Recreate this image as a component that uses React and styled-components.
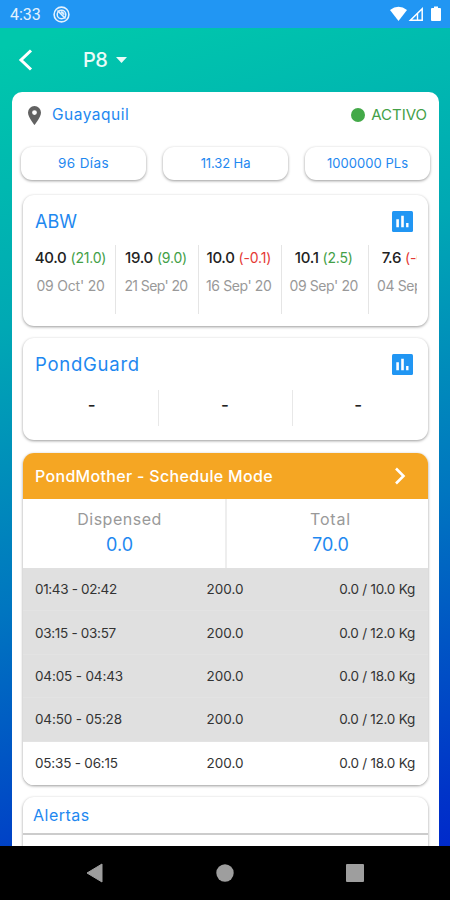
import React from 'react';
import styled, { createGlobalStyle } from 'styled-components';

const GlobalStyle = createGlobalStyle`
  * {
    box-sizing: border-box;
  }

  body {
    margin: 0;
    font-family: Inter, 'Liberation Sans', sans-serif;
  }
`;

const Screen = styled.div`
  width: 450px;
  height: 900px;
  overflow: hidden;
  display: flex;
  flex-direction: column;
`;

const StatusBar = styled.div`
  height: 28px;
  flex: none;
  display: flex;
  align-items: center;
  padding: 0 8px 0 10px;
  background: #2196f3;
`;

const Time = styled.span`
  width: 43px;
  font: 400 16px Roboto, sans-serif;
  color: #e4f2fe;
  padding-top: 1px;
`;

const StatusIcons = styled.div`
  margin-left: auto;
  display: flex;
`;

const Body = styled.div`
  height: 818px;
  flex: none;
  overflow: hidden;
  padding: 0 11px 0 12px;
  background: linear-gradient(165deg, #00c8ac 2%, #00a8b4 32%, #0076c0 62%, #0034c8 94%, #002acb 100%);
`;

const AppBar = styled.div`
  height: 64px;
  display: flex;
  align-items: center;
  padding-left: 5px;
`;

const PondName = styled.span`
  margin: 0 9px 0 48px;
  font-size: 20px;
  font-weight: 500;
  letter-spacing: -0.5px;
  color: #e9fbf8;
`;

const Panel = styled.main`
  height: 780px;
  padding: 0 11px;
  border-radius: 10px 10px 0 0;
  background: #fff;
`;

const Location = styled.div`
  height: 46px;
  display: flex;
  align-items: center;
  padding: 0 1px 0 5px;
`;

const Label = styled.span`
  font-size: ${({ $size }) => $size || 14}px;
  font-weight: ${({ $weight }) => $weight || 400};
  letter-spacing: ${({ $spacing }) => $spacing || 0}px;
  color: ${({ $color }) => $color || '#1e88f0'};
  white-space: nowrap;
`;

const Place = styled(Label)`
  margin: 0 0 2px 11px;
`;

const Status = styled(Label)`
  margin-bottom: 2px;
`;

const Dot = styled.span`
  width: 14px;
  height: 14px;
  margin: 0 6px 0 auto;
  border-radius: 50%;
  background: #43a948;
`;

const Pills = styled.div`
  height: 45px;
  margin: 9px -2px 0;
  display: flex;
  gap: 17px;
`;

const Pill = styled.div`
  flex: 1;
  height: 33px;
  display: flex;
  align-items: center;
  justify-content: center;
  padding-bottom: 2px;
  border-radius: 11px;
  box-shadow: 0 1px 3px rgba(0, 0, 0, 0.4);
`;

const Card = styled.section`
  height: ${({ $height }) => $height}px;
  margin-top: ${({ $top }) => $top || 0}px;
  border-radius: 11px;
  overflow: hidden;
  background: #fff;
  box-shadow: 0 1px 3px rgba(0, 0, 0, 0.4);
`;

const CardTitle = styled.div`
  height: 52px;
  display: flex;
  align-items: center;
  justify-content: space-between;
  padding: 0 15px 0 12px;
`;

const History = styled.div`
  height: 69px;
  margin: -2px 11px 0 12px;
  display: flex;
  overflow: hidden;
`;

const Sample = styled.div`
  flex: none;
  width: ${({ $width }) => $width}px;
  padding: 3px ${({ $first }) => ($first ? '9px 0 0' : '10px 0 8px')};
  display: flex;
  flex-direction: column;
  align-items: center;
  gap: 10px;
  border-right: 1.5px solid #e5e5e5;
`;

const Reading = styled.div`
  display: flex;
  align-items: center;
  gap: 4px;
  height: 19px;
`;

const Guards = styled.div`
  height: 36px;
  margin: 0 3px;
  display: flex;
`;

const Guard = styled.div`
  flex: 1;
  display: flex;
  align-items: center;
  justify-content: center;

  & + & {
    border-left: 1.5px solid #e8e8e8;
  }
`;

const Dash = styled.span`
  width: 9px;
  color: #222;
  font-size: 17px;
  font-weight: 500;
  line-height: 28px;
  padding-bottom: 6px;
`;

const FeederHeader = styled.div`
  height: 46px;
  display: flex;
  align-items: center;
  justify-content: space-between;
  padding: 0 22px 0 12px;
  background: #f5a623;
`;

const Totals = styled.div`
  height: 69px;
  display: flex;
`;

const Total = styled.div`
  width: ${({ $width }) => $width}px;
  display: flex;
  flex-direction: column;
  align-items: center;
  gap: 5px;
  padding: ${({ $padding }) => $padding};

  & + & {
    border-left: 2px solid #eee;
  }
`;

const Row = styled.div`
  height: 43.4px;
  display: grid;
  grid-template-columns: 1fr 60px 1fr;
  align-items: center;
  justify-items: center;
  padding: 0 13px 0 12px;
  background: ${({ $done }) => ($done ? '#e0e0e0' : '#fff')};
  border-bottom: 1px solid ${({ $done }) => ($done ? '#e3e3e3' : '#fff')};

  & > :first-child {
    justify-self: start;
  }

  & > :last-child {
    justify-self: end;
  }
`;

const AlertsTitle = styled.div`
  height: 38px;
  display: flex;
  align-items: center;
  padding-left: 10px;
  border-bottom: 2px solid #ccc;
`;

const NavBar = styled.nav`
  height: 54px;
  flex: none;
  display: flex;
  align-items: center;
  justify-content: space-between;
  padding: 0 86px;
  background: #000;
`;

const ChartIcon = () => (
  <svg width="21" height="21" viewBox="0 0 21 21">
    <rect width="21" height="21" rx="1.5" fill="#2196f3" />
    <path d="M4.3 8.3h2.6v8H4.3zM9.2 4.8h2.6v11.5H9.2zM14.1 12h2.4v4.3h-2.4z" fill="#fff" />
  </svg>
);

const GREEN = '#43a047';
const RED = '#e53935';

const samples = [
  { value: '40.0', diff: '(21.0)', date: "09 Oct' 20", width: 81, color: GREEN, spacing: -0.2 },
  { value: '19.0', diff: '(9.0)', date: "21 Sep' 20", width: 83, color: GREEN, spacing: -0.6 },
  { value: '10.0', diff: '(-0.1)', date: "16 Sep' 20", width: 82.5, color: RED, spacing: -0.4 },
  { value: '10.1', diff: '(2.5)', date: "09 Sep' 20", width: 87.5, color: GREEN, spacing: -0.4 },
  { value: '7.6', diff: '(-0.5)', date: "04 Sep' 20", width: 88, color: RED, spacing: -0.4 },
];

const schedule = [
  { time: '01:43 - 02:42', amount: '0.0 / 10.0 Kg', done: true, spacing: -0.35 },
  { time: '03:15 - 03:57', amount: '0.0 / 12.0 Kg', done: true, spacing: -0.3 },
  { time: '04:05 - 04:43', amount: '0.0 / 18.0 Kg', done: true, spacing: -0.15 },
  { time: '04:50 - 05:28', amount: '0.0 / 12.0 Kg', done: true, spacing: -0.15 },
  { time: '05:35 - 06:15', amount: '0.0 / 18.0 Kg', done: false, spacing: -0.2 },
];

const App = () => (
  <Screen>
    <GlobalStyle />
    <StatusBar>
      <Time>4:33</Time>
      <svg width="17" height="17" viewBox="0 0 17 17" fill="none" stroke="#e4f2fe">
        <circle cx="8.5" cy="8.5" r="7.4" strokeWidth="1.6" />
        <circle cx="8.5" cy="8.5" r="4.3" strokeWidth="1.5" />
        <path d="M4.5 4.5l8 8" strokeWidth="1.7" />
        <path d="M8 5.5a3 3 0 0 1 3.2 3.4L8 6.5z" fill="#e4f2fe" strokeWidth="0.6" />
      </svg>
      <StatusIcons>
        <svg width="52" height="16" viewBox="0 0 52 16">
          <path d="M0 4Q8.5-2.5 17 4L8.5 15z" fill="#fff" />
          <path d="M32.2 2.8v11.4H20.4z" fill="none" stroke="#fff" strokeWidth="1.5" />
          <path d="M27.5 7.5V14" stroke="#fff" strokeWidth="1.4" />
          <path d="M41 3q0-1 1-1h2V.5h4V2h2q1 0 1 1v11q0 1-1 1h-8q-1 0-1-1z" fill="#fff" />
        </svg>
      </StatusIcons>
    </StatusBar>
    <Body>
      <AppBar>
        <svg width="18" height="24" viewBox="0 0 18 24">
          <path d="M14 2.5L4 12l10 9.5" fill="none" stroke="#fff" strokeWidth="3" />
        </svg>
        <PondName>P8</PondName>
        <svg width="11" height="6" viewBox="0 0 11 6">
          <path d="M0 0h11L5.5 6z" fill="#e9fbf8" />
        </svg>
      </AppBar>
      <Panel>
        <Location>
          <svg width="13" height="19" viewBox="0 0 13 19">
            <path
              d="M6.5 0A6.5 6.5 0 0 0 0 6.5C0 11.3 6.5 19 6.5 19S13 11.3 13 6.5A6.5 6.5 0 0 0 6.5 0zm0 9a2.4 2.4 0 1 1 0-4.8 2.4 2.4 0 0 1 0 4.8z"
              fill="#626262"
            />
          </svg>
          <Place $size={15.5} $spacing={0.5}>Guayaquil</Place>
          <Dot />
          <Status $size={15} $color="#43a047">ACTIVO</Status>
        </Location>
        <Pills>
          <Pill><Label $size={13.5} $spacing={0.4}>96 Días</Label></Pill>
          <Pill><Label $size={13} $spacing={-0.1}>11.32 Ha</Label></Pill>
          <Pill><Label $size={13} $spacing={0.05}>1000000 PLs</Label></Pill>
        </Pills>
        <Card $height={131} $top={3}>
          <CardTitle>
            <Label $size={18}>ABW</Label>
            <ChartIcon />
          </CardTitle>
          <History>
            {samples.map((s, i) => (
              <Sample key={s.date} $width={s.width} $first={i === 0}>
                <Reading>
                  <Label $size={15} $weight={500} $color="#222" $spacing={-0.3}>{s.value}</Label>
                  <Label $size={14} $color={s.color} $spacing={-0.2}>{s.diff}</Label>
                </Reading>
                <Label $size={14} $color="#999" $spacing={s.spacing}>{s.date}</Label>
              </Sample>
            ))}
          </History>
        </Card>
        <Card $height={102} $top={12}>
          <CardTitle>
            <Label $size={18.5} $spacing={0.75}>PondGuard</Label>
            <ChartIcon />
          </CardTitle>
          <Guards>
            <Guard><Dash>-</Dash></Guard>
            <Guard><Dash>-</Dash></Guard>
            <Guard><Dash>-</Dash></Guard>
          </Guards>
        </Card>
        <Card $height={332} $top={13}>
          <FeederHeader>
            <Label $size={16} $weight={500} $color="#fff" $spacing={0.32}>PondMother - Schedule Mode</Label>
            <svg width="12" height="18" viewBox="0 0 12 18">
              <path d="M2 1.5L9.5 9 2 16.5" fill="none" stroke="#fff" strokeWidth="2.6" />
            </svg>
          </FeederHeader>
          <Totals>
            <Total $width={202} $padding="10px 9px 0 0">
              <Label $size={16} $color="#999" $spacing={0.5}>Dispensed</Label>
              <Label $size={18}>0.0</Label>
            </Total>
            <Total $width={203} $padding="10px 0 0 6px">
              <Label $size={16} $color="#999" $spacing={0.8}>Total</Label>
              <Label $size={18}>70.0</Label>
            </Total>
          </Totals>
          {schedule.map((row) => (
            <Row key={row.time} $done={row.done}>
              <Label $size={13.5} $color="#333" $spacing={row.spacing}>{row.time}</Label>
              <Label $size={13.5} $color="#333">200.0</Label>
              <Label $size={13.5} $color="#333" $spacing={-0.25}>{row.amount}</Label>
            </Row>
          ))}
        </Card>
        <Card $height={80} $top={12}>
          <AlertsTitle>
            <Label $size={16} $spacing={0.5}>Alertas</Label>
          </AlertsTitle>
        </Card>
      </Panel>
    </Body>
    <NavBar>
      <svg width="17" height="20" viewBox="0 0 17 20">
        <path d="M16 1v18L1 10z" fill="#9e9e9e" stroke="#9e9e9e" strokeLinejoin="round" />
      </svg>
      <svg width="18" height="18" viewBox="0 0 18 18">
        <circle cx="9" cy="9" r="8.7" fill="#9e9e9e" />
      </svg>
      <svg width="18" height="18" viewBox="0 0 18 18">
        <rect width="18" height="18" rx="1" fill="#9e9e9e" />
      </svg>
    </NavBar>
  </Screen>
);

export default App;
